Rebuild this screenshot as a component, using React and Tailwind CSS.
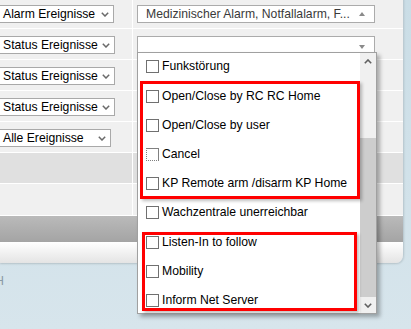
import React from "react";

const Chevron = () => (
  <svg width="8" height="5" viewBox="0 0 8 5" className="shrink-0">
    <path d="M0.8 0.8 L4 4 L7.2 0.8" fill="none" stroke="#6a6a6a" strokeWidth="1.5" />
  </svg>
);

function LeftSelect({ label, cls }) {
  return (
    <div className={`ml-[-2px] h-[18px] border border-[#a9a9a9] bg-white flex items-center justify-between pl-[4px] pr-[4px] ${cls}`}>
      <span className="leading-none text-black whitespace-nowrap">{label}</span>
      <Chevron />
    </div>
  );
}

function Row({ children, right, bg = "bg-[#f0f0f0]", h = "h-[31px]" }) {
  return (
    <div className={`flex border-b border-white ${h} ${bg}`}>
      <div className="w-[133px] border-r border-white pt-[7px]">{children}</div>
      <div className="flex-1 pt-[7px] pl-[4px]">{right}</div>
    </div>
  );
}

function Check({ dotted }) {
  return (
    <div
      className={`w-[13px] h-[13px] bg-white border border-[#707070] shrink-0 ${
        dotted ? "[border-left-style:dotted] [border-bottom-style:dotted] border-[#808080]" : ""
      }`}
    />
  );
}

function Item({ label, h, dotted }) {
  return (
    <div className={h}>
      <div className="flex items-center h-[13px] gap-[3px]">
        <Check dotted={dotted} />
        <span className="leading-none text-black whitespace-nowrap">{label}</span>
      </div>
    </div>
  );
}

export default function App() {
  return (
    <div className="relative w-[411px] h-[329px] overflow-hidden bg-gradient-to-b from-[#cadde6] to-[#d7e5ec] font-['Liberation_Sans',Arial,sans-serif] text-[12.2px]">
      {/* panel */}
      <div className="mt-[-2px] w-[404px] border-r border-[#bccbd3] rounded-br-[8px] shadow-[0_1px_2px_rgba(0,0,0,0.15)] overflow-hidden">
        <Row
          right={
            <div className="w-[238px] h-[18px] border border-[#ababab] bg-white flex items-center justify-between pl-[8px] pr-[9px]">
              <span className="leading-none text-[#3a3a3a] whitespace-nowrap">Medizinischer Alarm, Notfallalarm, F...</span>
              <svg width="6" height="4" viewBox="0 0 6 4"><path d="M0 4 L3 0 L6 4 Z" fill="#8a8a8a" /></svg>
            </div>
          }
        >
          <LeftSelect label="Alarm Ereignisse" cls="w-[116px]" />
        </Row>
        <Row
          right={
            <div className="w-[238px] h-[18px] border border-[#ababab] bg-white flex items-center justify-end pr-[9px]">
              <svg width="6" height="4" viewBox="0 0 6 4" className="mt-[4px]"><path d="M0 0 L6 0 L3 4 Z" fill="#8a8a8a" /></svg>
            </div>
          }
        >
          <LeftSelect label="Status Ereignisse" cls="w-[117px]" />
        </Row>
        <Row>
          <LeftSelect label="Status Ereignisse" cls="w-[117px]" />
        </Row>
        <Row>
          <LeftSelect label="Status Ereignisse" cls="w-[117px]" />
        </Row>
        <Row>
          <LeftSelect label="Alle Ereignisse" cls="w-[113px]" />
        </Row>
        <Row bg="bg-[#e0e0e0]" />
        <Row bg="bg-[#f0f0f0]" h="h-[32px]" />
        <div className="h-[26px] bg-gradient-to-b from-[#bababa] to-[#a4a4a4]" />
        <div className="h-[21px] bg-gradient-to-b from-white to-[#e4e4e4]" />
      </div>

      {/* footer text (cut off) */}
      <div className="mt-[11px] w-[4px] overflow-hidden flex justify-end text-[12px] leading-[14px] text-[#8b9aa4]">
        <span className="whitespace-nowrap">GmbH</span>
      </div>

      {/* dropdown list */}
      <div className="absolute left-[137px] top-[52px] w-[240px] h-[262px] bg-white border border-[#a0a0a0] shadow-[3px_3px_4px_rgba(0,0,0,0.3)] flex">
        <div className="flex-1 pt-[7px] pl-[8px]">
          <Item label="Funkstörung" h="h-[30px]" />
          <Item label="Open/Close by RC RC Home" h="h-[29px]" />
          <Item label="Open/Close by user" h="h-[29px]" />
          <Item label="Cancel" h="h-[29px]" dotted />
          <Item label="KP Remote arm /disarm KP Home" h="h-[29px]" />
          <Item label="Wachzentrale unerreichbar" h="h-[30px]" />
          <Item label="Listen-In to follow" h="h-[29px]" />
          <Item label="Mobility" h="h-[29px]" />
          <Item label="Inform Net Server" h="h-[13px]" />
        </div>
        <div className="w-[16px] bg-[#f0f0f0] flex flex-col">
          <div className="h-[17px] flex items-center justify-center">
            <svg width="8" height="5" viewBox="0 0 8 5"><path d="M0.8 4.2 L4 1 L7.2 4.2" fill="none" stroke="#606060" strokeWidth="1.6" /></svg>
          </div>
          <div className="h-[68px]" />
          <div className="h-[159px] bg-[#cdcdcd]" />
          <div className="h-[16px] flex items-center justify-center">
            <svg width="8" height="5" viewBox="0 0 8 5"><path d="M0.8 0.8 L4 4 L7.2 0.8" fill="none" stroke="#606060" strokeWidth="1.6" /></svg>
          </div>
        </div>
      </div>

      {/* red annotation boxes */}
      <div className="absolute left-[140px] top-[81px] w-[220px] h-[118px] border-[3px] border-[#ff0000] shadow-[2px_2px_3px_rgba(0,0,0,0.25)]" />
      <div className="absolute left-[142px] top-[232px] w-[215px] h-[79px] border-[3px] border-[#ff0000] shadow-[2px_2px_3px_rgba(0,0,0,0.25)]" />
    </div>
  );
}
